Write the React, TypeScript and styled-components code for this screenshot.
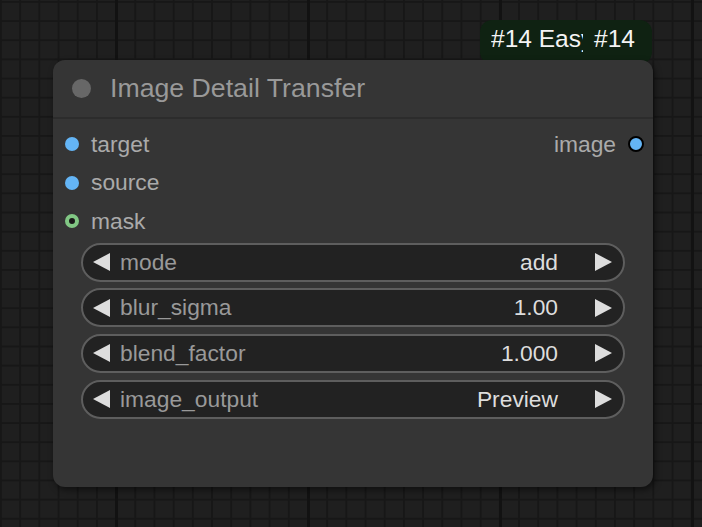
import { FunctionComponent, Fragment } from "react";
import styled, { createGlobalStyle } from "styled-components";

const GlobalStyle = createGlobalStyle`
    html, body {
        margin: 0;
        padding: 0;
        width: 702px;
        height: 527px;
        overflow: hidden;
        background-color: #1e1e1e;
    }
`;

const Canvas = styled.div`
    position: relative;
    width: 702px;
    height: 527px;
    overflow: hidden;
    font-family: "Liberation Sans", Arial, sans-serif;
    background-color: #1f1f1f;
    background-image:
        linear-gradient(to right, #121212 3px, transparent 3px),
        linear-gradient(to right, #171717 2px, transparent 2px),
        linear-gradient(to bottom, #171717 2px, transparent 2px);
    background-size: 192px 192px, 19.2px 19.2px, 19.15px 19.15px;
    background-position: 115px 0, 0 0, 0 1px;
`;

const Badge = styled.div`
    position: absolute;
    left: 480px;
    top: 20px;
    width: 172px;
    height: 44px;
    display: flex;
    align-items: flex-start;
    padding: 5px 0 0 11px;
    box-sizing: border-box;
    border-radius: 12px;
    background-color: #0f2212;
    color: #f4f4f4;
    font-size: 24.5px;
`;

const BadgeTitle = styled.span`
    display: block;
    width: 92px;
    overflow: hidden;
    white-space: nowrap;
`;

const BadgeId = styled.span`
    display: block;
    margin-left: 11px;
`;

const Node = styled.div`
    position: absolute;
    left: 53px;
    top: 60px;
    width: 600px;
    height: 427px;
    border-radius: 12px;
    background-color: #353535;
    box-shadow: 2px 3px 6px rgba(0, 0, 0, 0.5);
    display: flex;
    flex-direction: column;
`;

const TitleBar = styled.div`
    display: flex;
    align-items: center;
    gap: 19px;
    height: 57px;
    padding: 0 0 0 19px;
    border-bottom: 2px solid #2c2c2c;
    color: #999999;
    font-size: 26.7px;
`;

const TitleDot = styled.span`
    width: 19px;
    height: 19px;
    border-radius: 50%;
    background-color: #676767;
`;

const Slots = styled.div`
    display: grid;
    grid-template-columns: 1fr auto;
    grid-auto-rows: 38.5px;
    padding: 6px 0 0 12px;
`;

const Slot = styled.div<{ $output?: boolean }>`
    display: flex;
    align-items: center;
    gap: 12px;
    justify-content: ${p => (p.$output ? "flex-end" : "flex-start")};
    padding-right: ${p => (p.$output ? "9px" : "0")};
    color: #aaaaaa;
    font-size: 22.8px;
`;

const SlotDot = styled.span<{ $color: string; $ring?: boolean; $outlined?: boolean }>`
    width: ${p => (p.$outlined ? "16px" : "14px")};
    height: ${p => (p.$outlined ? "16px" : "14px")};
    box-sizing: border-box;
    border-radius: 50%;
    background-color: ${p => (p.$ring ? "#1a1a1a" : p.$color)};
    border: ${p =>
        p.$ring
            ? `4px solid ${p.$color}`
            : p.$outlined
            ? "2px solid #000"
            : "none"};
`;

const Widgets = styled.div`
    display: flex;
    flex-direction: column;
    gap: 6.7px;
    padding: 2px 28px 0 28px;
`;

const Widget = styled.div`
    display: flex;
    align-items: center;
    height: 39px;
    box-sizing: border-box;
    padding: 0 11px 0 10px;
    border: 2px solid #5e5e5e;
    border-radius: 20px;
    background-color: #222222;
    font-size: 22.8px;
`;

const Arrow = styled.svg`
    width: 17px;
    height: 18px;
    flex-shrink: 0;
    fill: #dddddd;
`;

const WidgetLabel = styled.span`
    flex: 1;
    margin-left: 10px;
    color: #999999;
`;

const WidgetValue = styled.span`
    color: #dddddd;
    margin-right: 37px;
`;

const slots = [
    { name: "target", color: "#64b5f6" },
    { name: "source", color: "#64b5f6" },
    { name: "mask", color: "#81c784", ring: true },
];

const widgets = [
    { name: "mode", value: "add" },
    { name: "blur_sigma", value: "1.00" },
    { name: "blend_factor", value: "1.000" },
    { name: "image_output", value: "Preview" },
];

const App: FunctionComponent = () => {
    return (
        <>
            <GlobalStyle />
            <Canvas>
                <Badge>
                    <BadgeTitle>#14 Easy Image Detail Transfer</BadgeTitle>
                    <BadgeId>#14</BadgeId>
                </Badge>
                <Node>
                    <TitleBar>
                        <TitleDot />
                        Image Detail Transfer
                    </TitleBar>
                    <Slots>
                        {slots.map((slot, i) => (
                            <Fragment key={slot.name}>
                                <Slot>
                                    <SlotDot $color={slot.color} $ring={slot.ring} />
                                    {slot.name}
                                </Slot>
                                {i === 0 ? (
                                    <Slot $output>
                                        image
                                        <SlotDot $color="#64b5f6" $outlined />
                                    </Slot>
                                ) : (
                                    <span />
                                )}
                            </Fragment>
                        ))}
                    </Slots>
                    <Widgets>
                        {widgets.map(w => (
                            <Widget key={w.name}>
                                <Arrow viewBox="0 0 17 18">
                                    <polygon points="17,0 17,18 0,9" />
                                </Arrow>
                                <WidgetLabel>{w.name}</WidgetLabel>
                                <WidgetValue>{w.value}</WidgetValue>
                                <Arrow viewBox="0 0 17 18">
                                    <polygon points="0,0 0,18 17,9" />
                                </Arrow>
                            </Widget>
                        ))}
                    </Widgets>
                </Node>
            </Canvas>
        </>
    );
};

export default App;
